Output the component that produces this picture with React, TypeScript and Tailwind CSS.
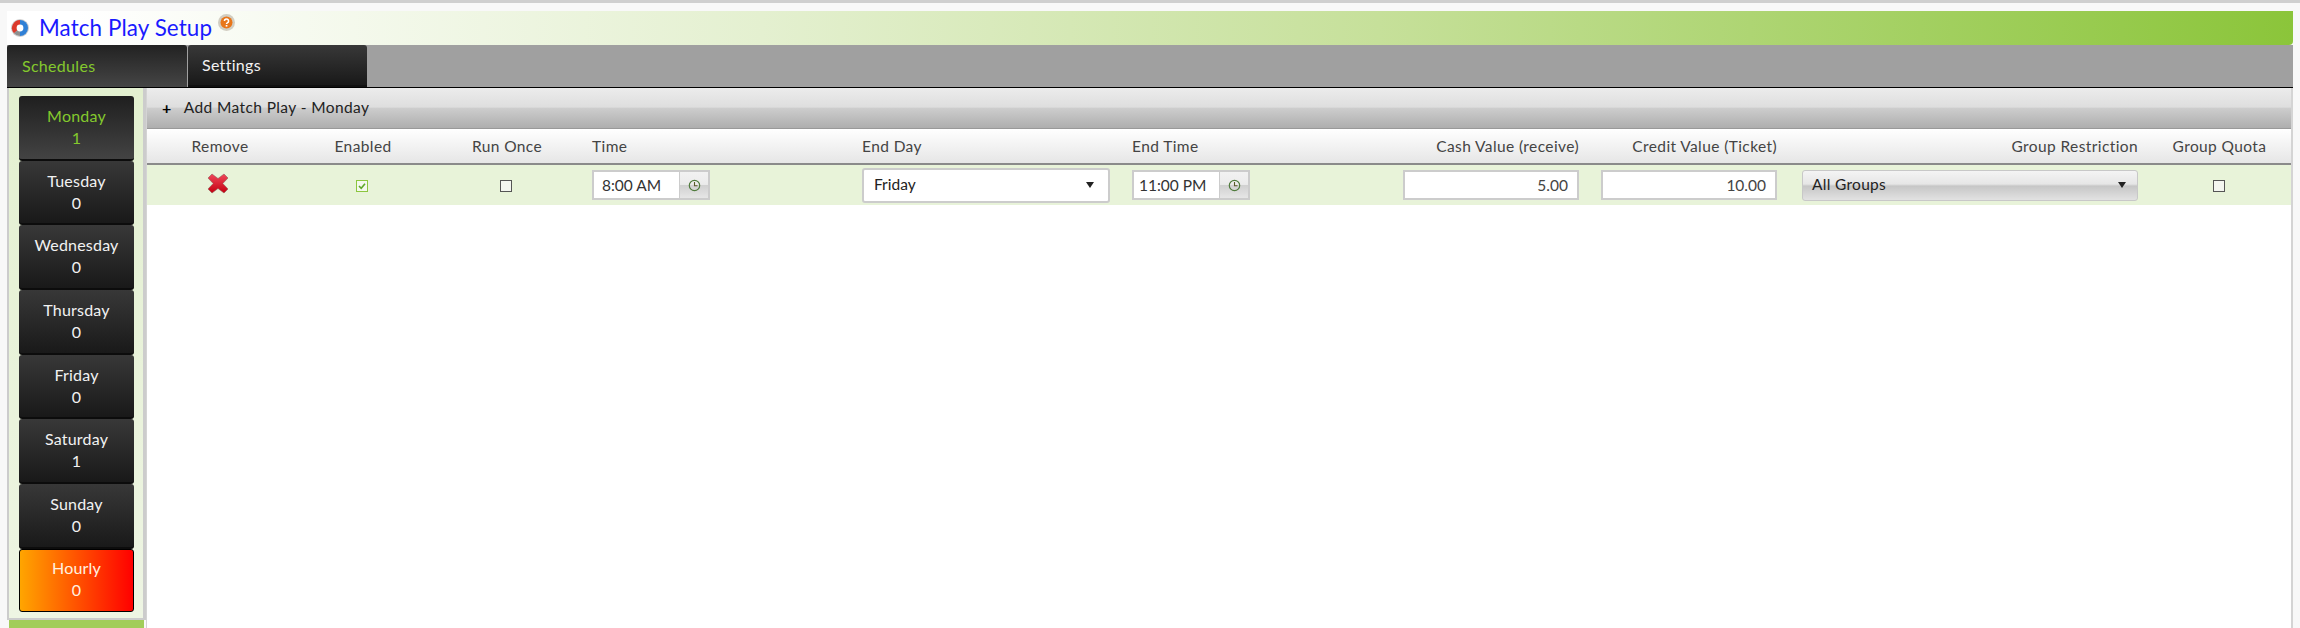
import React from "react";

const days = [
  { name: "Monday", n: "1", active: true },
  { name: "Tuesday", n: "0" },
  { name: "Wednesday", n: "0" },
  { name: "Thursday", n: "0" },
  { name: "Friday", n: "0" },
  { name: "Saturday", n: "1" },
  { name: "Sunday", n: "0" },
];

function Logo() {
  return (
    <svg width="18" height="18" viewBox="0 0 18 18" className="shrink-0">
      <circle cx="9" cy="9" r="9" fill="#cfcfcf" />
      <path d="M9 1a8 8 0 0 0-6 13.3L9 9z" fill="#dc3a2c" />
      <path d="M9 1a8 8 0 0 1 0 16z" fill="#2f80d6" />
      <path d="M3 14.3A8 8 0 0 0 9 17V9z" fill="#8f8f8f" />
      <circle cx="9" cy="9" r="3.4" fill="#fff" />
    </svg>
  );
}

function Help() {
  return (
    <svg width="17" height="17" viewBox="0 0 17 17" className="mt-[1px] shrink-0">
      <circle cx="8.5" cy="8.5" r="8.5" fill="#d2cec2" />
      <circle cx="8.5" cy="8.5" r="6" fill="#e8761a" />
      <path d="M6.4 7a2.1 2 0 1 1 3.2 1.7c-.7.4-1.1.8-1.1 1.4" fill="none" stroke="#fff" strokeWidth="1.5" />
      <rect x="7.7" y="11" width="1.7" height="1.6" fill="#fff" />
    </svg>
  );
}

function RedX() {
  return (
    <svg width="22" height="21" viewBox="0 0 22 21">
      <defs>
        <linearGradient id="rx" x1="0" y1="0" x2="0" y2="1">
          <stop offset="0" stopColor="#f0485a" />
          <stop offset="1" stopColor="#c40010" />
        </linearGradient>
      </defs>
      <path
        d="M5 1 L11 5.5 L17 1 L21 5 L15.8 10.5 L21 16 L17 20 L11 15.5 L5 20 L1 16 L6.2 10.5 L1 5 Z"
        fill="url(#rx)"
        stroke="#8a5a5a"
        strokeOpacity="0.55"
        strokeWidth="1"
        strokeLinejoin="round"
      />
    </svg>
  );
}

function Clock() {
  return (
    <svg width="13" height="13" viewBox="0 0 13 13">
      <circle cx="6.5" cy="6.5" r="5.2" fill="none" stroke="#4f7a3c" strokeWidth="1.2" />
      <path d="M6.5 3v3.7h3" fill="none" stroke="#5a5a2a" strokeWidth="1.1" />
    </svg>
  );
}

function Check({ checked }: { checked?: boolean }) {
  if (checked) {
    return (
      <svg width="12" height="12" viewBox="0 0 12 12">
        <rect x="0.5" y="0.5" width="11" height="11" fill="#f4f8ee" stroke="#8cc63f" />
        <path d="M3 6l2.2 2.3L9 3.8" fill="none" stroke="#5ea82a" strokeWidth="1.6" />
      </svg>
    );
  }
  return (
    <svg width="12" height="12" viewBox="0 0 12 12">
      <rect x="0.5" y="0.5" width="11" height="11" fill="#f4f6f0" stroke="#555" />
    </svg>
  );
}

function TimeInput({ value, pad }: { value: string; pad: string }) {
  return (
    <div className="flex h-[30px] w-[118px] border-2 border-[#ccc] bg-white">
      <div className={`flex-1 whitespace-nowrap text-[15.5px] leading-[26px] text-[#333] ${pad}`}>{value}</div>
      <div className="flex w-[29px] shrink-0 items-center justify-center border-l border-[#ccc] bg-[linear-gradient(to_bottom,#f2f2f2_0%,#ebebeb_48%,#d0d0d0_50%,#e6e6e6_100%)]">
        <Clock />
      </div>
    </div>
  );
}

function Caret() {
  return <div className="h-0 w-0 border-x-[4px] border-t-[6px] border-x-transparent border-t-[#222]" />;
}

function DayButton({ name, n, active }: { name: string; n: string; active?: boolean }) {
  return (
    <div
      className={`flex h-[64.7px] w-[115px] flex-col items-center rounded-[3px] border-b-2 border-b-[#0c0c0c] pt-[9px] text-[16px] leading-[22px] tracking-[0.2px] ${
        active
          ? "bg-[linear-gradient(to_bottom,#1f1f1f,#434343)] text-[#84c92d]"
          : "bg-[linear-gradient(to_bottom,#383838,#191919)] text-[#f2f2f2]"
      }`}
    >
      <span>{name}</span>
      <span>{n}</span>
    </div>
  );
}

const headCell = "whitespace-nowrap text-[15.5px] leading-[34px] tracking-[0.4px] text-[#444]";

export default function App() {
  return (
    <div className="flex h-[628px] w-[2300px] flex-col overflow-hidden border-t-[3px] border-[#cfcfcf] bg-[#f8f8f8] pl-[7px] pr-[7px] pt-[8px] font-[Lato,sans-serif]">
      <div className="flex h-[34px] shrink-0 items-center gap-[10px] rounded-br-[4px] bg-[linear-gradient(to_right,#ffffff_3%,#e4f0d0_33%,#c6e09a_60%,#8bc53a_100%)] pl-[4px]">
        <Logo />
        <div className="flex items-start gap-[6px]">
          <span className="text-[22.4px] leading-[30px] tracking-[0.1px] text-[#1a1aff]">Match Play Setup</span>
          <Help />
        </div>
      </div>

      <div className="flex h-[43px] shrink-0 gap-px border-b border-black bg-[#a0a0a0]">
        <div className="flex w-[180px] items-center rounded-t-[3px] bg-[linear-gradient(to_bottom,#222222,#454545)] pl-[15px] text-[16px] tracking-[0.3px] text-[#84c92d]">
          Schedules
        </div>
        <div className="flex w-[179px] items-center rounded-t-[3px] border-b-2 border-[#111] bg-[linear-gradient(to_bottom,#383838,#191919)] pl-[14px] text-[16px] tracking-[0.3px] text-[#f2f2f2]">
          Settings
        </div>
      </div>

      <div className="flex min-h-0 flex-1">
        <div className="flex w-[139px] shrink-0 flex-col">
          <div className="h-[532px] shrink-0 border-x-2 border-b-2 border-[#ccc] border-r-[3px] bg-[linear-gradient(to_bottom,#e3f0d0,#eef5e3)] pl-[10px] pt-[8px]">
            {days.map((d) => (
              <DayButton key={d.name} {...d} />
            ))}
            <div className="flex h-[63px] w-[115px] flex-col items-center rounded-[3px] border border-black bg-[linear-gradient(to_right,#ffa500,#ff0000)] pt-[7px] text-[16px] leading-[22px] tracking-[0.2px] text-[#fff2e0]">
              <span>Hourly</span>
              <span>0</span>
            </div>
          </div>
          <div className="mx-[2px] flex-1 bg-[#a2cd5a]" />
        </div>

        <div className="flex min-w-0 flex-1 flex-col border-l border-r-2 border-[#d4d4d4] bg-white">
          <div className="flex h-[41px] shrink-0 items-center gap-[12px] border-b border-[#999] bg-[linear-gradient(to_bottom,#ececec_0%,#dedede_48%,#cdcdcd_50%,#aeaeae_100%)] pl-[15px] text-[15.5px] tracking-[0.4px] text-[#222]">
            <span className="text-[16px] font-bold text-black">+</span>
            <span>Add Match Play - Monday</span>
          </div>

          <div className="grid shrink-0 grid-cols-[146px_140px_148px_270px_270px_270px_197px_199px_361px_1fr] border-b-2 border-[#8a8a8a] bg-[linear-gradient(to_bottom,#ffffff,#e6e6e6)]">
            <div className={`${headCell} text-center`}>Remove</div>
            <div className={`${headCell} text-center`}>Enabled</div>
            <div className={`${headCell} text-center`}>Run Once</div>
            <div className={`${headCell} pl-[11px]`}>Time</div>
            <div className={`${headCell} pl-[11px]`}>End Day</div>
            <div className={`${headCell} pl-[11px]`}>End Time</div>
            <div className={`${headCell} pr-[9px] text-right`}>Cash Value (receive)</div>
            <div className={`${headCell} pr-[10px] text-right`}>Credit Value (Ticket)</div>
            <div className={`${headCell} pr-[10px] text-right`}>Group Restriction</div>
            <div className={`${headCell} text-center`}>Group Quota</div>
          </div>

          <div className="grid h-[40px] shrink-0 grid-cols-[146px_140px_148px_270px_270px_270px_197px_199px_361px_1fr] items-center bg-[#e8f3d9]">
            <div className="flex justify-center pb-[3px] pr-[4px]">
              <RedX />
            </div>
            <div className="flex justify-center pr-[2px] pt-[1px]">
              <Check checked />
            </div>
            <div className="flex justify-center pr-[2px] pt-[1px]">
              <Check />
            </div>
            <div className="pl-[11px]">
              <TimeInput value="8:00 AM" pad="pl-[8px]" />
            </div>
            <div className="pl-[11px]">
              <div className="flex h-[35px] w-[248px] items-center justify-between rounded-[3px] border-2 border-[#ccc] bg-white pl-[10px] pr-[14px] text-[15.5px] text-[#222]">
                <span>Friday</span>
                <Caret />
              </div>
            </div>
            <div className="pl-[11px]">
              <TimeInput value="11:00 PM" pad="pl-[5px]" />
            </div>
            <div className="flex justify-end pr-[9px]">
              <div className="h-[30px] w-[176px] border-2 border-[#ccc] bg-white pr-[9px] text-right text-[15.5px] leading-[26px] text-[#444]">
                5.00
              </div>
            </div>
            <div className="flex justify-end pr-[10px]">
              <div className="h-[30px] w-[176px] border-2 border-[#ccc] bg-white pr-[9px] text-right text-[15.5px] leading-[26px] text-[#444]">
                10.00
              </div>
            </div>
            <div className="flex justify-end pr-[10px]">
              <div className="flex h-[31px] w-[336px] items-center justify-between rounded-[3px] border border-[#c8c8c8] bg-[linear-gradient(to_bottom,#f4f4f4_0%,#e6e6e6_45%,#c6c6c6_52%,#e2e2e2_100%)] pl-[9px] pr-[11px] text-[15.5px] tracking-[0.3px] text-[#222]">
                <span>All Groups</span>
                <Caret />
              </div>
            </div>
            <div className="flex justify-center pr-[2px] pt-[1px]">
              <Check />
            </div>
          </div>
        </div>
      </div>
    </div>
  );
}
